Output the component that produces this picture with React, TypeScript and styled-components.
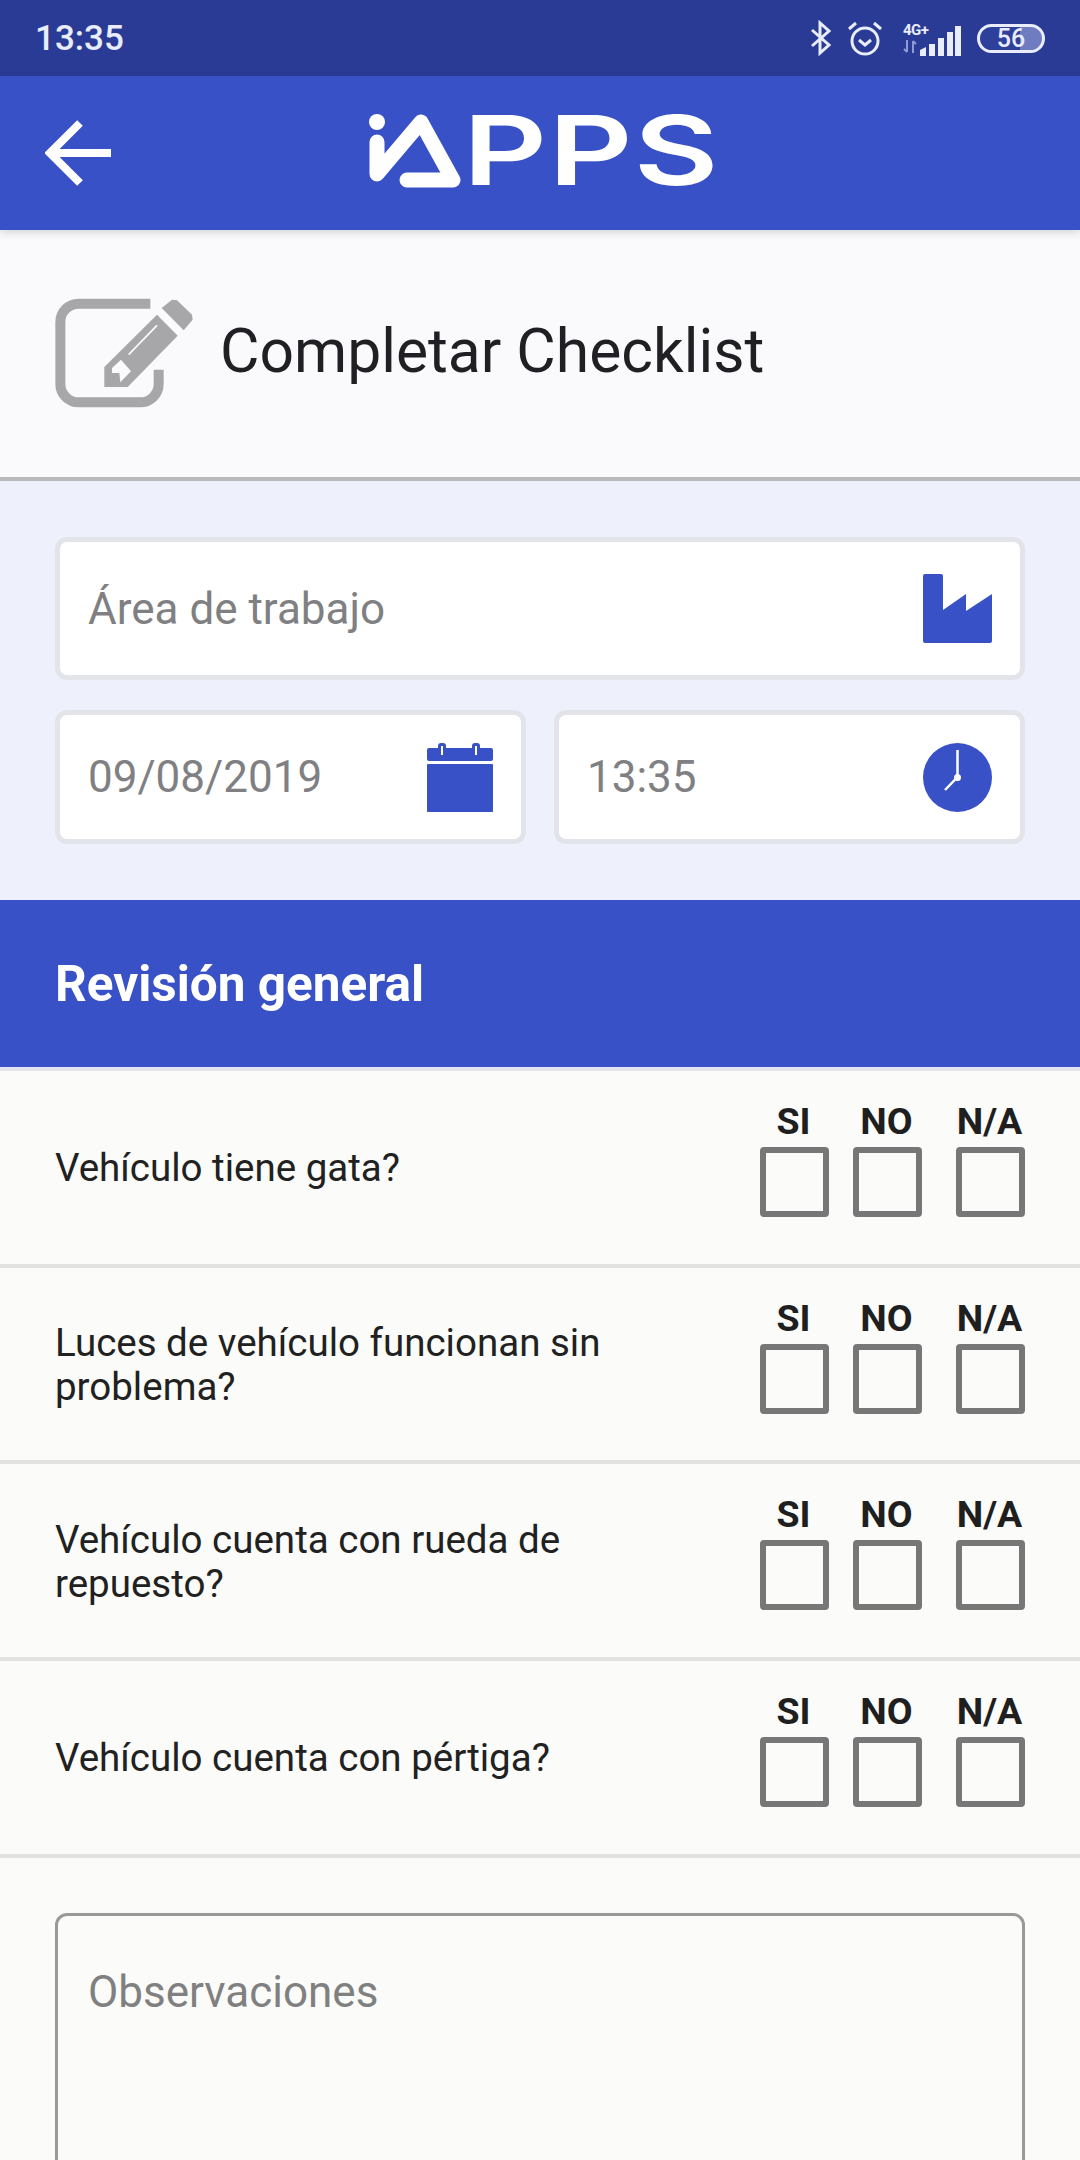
import styled, { createGlobalStyle } from "styled-components";

const GlobalStyle = createGlobalStyle`
  html, body {
    margin: 0;
    padding: 0;
    background: #fbfbf9;
    font-family: Roboto, "Noto Sans", sans-serif;
  }
  * {
    box-sizing: border-box;
  }
`;

const Page = styled.div`
  width: 1080px;
  height: 2160px;
  overflow: hidden;
  background: #fbfbf9;
`;

const StatusBar = styled.div`
  height: 76px;
  background: #2a3b96;
  display: flex;
  align-items: center;
  justify-content: space-between;
  padding: 0 35px;
  color: #e8ecfb;
`;

const Clock = styled.span`
  font-size: 35px;
  font-weight: 500;
`;

const StatusIcons = styled.div`
  display: flex;
  align-items: center;
`;

const Bluetooth = styled.svg`
  width: 22px;
  height: 36px;
  margin-right: 15px;
`;

const Alarm = styled.svg`
  width: 36px;
  height: 36px;
  margin-right: 20px;
`;

const Network = styled.div`
  width: 30px;
  display: flex;
  flex-direction: column;
  gap: 3px;
  margin-right: -13px;
  font-size: 15px;
  line-height: 14px;
  font-weight: 700;
  letter-spacing: -0.5px;
`;

const Arrows = styled.svg`
  width: 14px;
  height: 13px;
`;

const Signal = styled.svg`
  width: 41px;
  height: 30px;
  margin-right: 16px;
  align-self: flex-end;
`;

const Battery = styled.div`
  position: relative;
  width: 68px;
  height: 29px;
  border: 3.5px solid #e8ecfb;
  border-radius: 15px;
  overflow: hidden;
  display: flex;
  align-items: center;
  justify-content: center;
  font-size: 25px;
  font-weight: 500;
  background: linear-gradient(to right, #2f3f9c 64%, #6f7cc0 64%);
`;

const Header = styled.header`
  position: relative;
  height: 154px;
  background: #3951c6;
  display: flex;
  align-items: center;
  padding-left: 45px;
  box-shadow: 0 3px 8px rgba(0, 0, 0, 0.14);
`;

const BackArrow = styled.svg`
  width: 66px;
  height: 66px;
  flex: none;
`;

const Logo = styled.div`
  display: flex;
  align-items: center;
  margin-left: 254px;
  margin-top: -7px;
  color: #fff;
`;

const LogoMark = styled.svg`
  width: 96px;
  height: 76px;
  flex: none;
`;

const LogoText = styled.span`
  font-family: Inter, sans-serif;
  font-size: 96px;
  line-height: 76px;
  font-weight: 600;
  letter-spacing: 1px;
  margin-left: 2px;
  transform: scaleX(1.357);
  transform-origin: left center;
`;

const TitleBar = styled.section`
  height: 251px;
  background: #fafafd;
  border-bottom: 4px solid #b8b9bb;
  display: flex;
  align-items: center;
  gap: 26px;
  padding: 0 0 4px 55px;
`;

const TitleIcon = styled.svg`
  width: 139px;
  height: 110px;
  flex: none;
  margin-top: 3px;
`;

const Title = styled.h1`
  margin: 0;
  font-size: 60.6px;
  font-weight: 400;
  color: #1f1f24;
`;

const Form = styled.section`
  background: #eef1fc;
  padding: 56px 55px 56px;
  display: flex;
  flex-direction: column;
  gap: 30px;
`;

const FieldRow = styled.div`
  display: grid;
  grid-template-columns: 1fr 1fr;
  gap: 28px;
`;

const Field = styled.div<{ $height: number }>`
  height: ${(p) => p.$height}px;
  background: #fff;
  border: 5px solid #e2e4ea;
  border-radius: 12px;
  display: flex;
  align-items: center;
  justify-content: space-between;
  padding: 0 28px 0 28px;
  font-size: 44px;
  color: #808083;
`;

const FieldIcon = styled.svg`
  width: 69px;
  height: 69px;
  flex: none;
`;

const SectionHeader = styled.h2`
  margin: 0;
  height: 171px;
  background: #3951c6;
  border-bottom: 4px solid #e3e5ec;
  color: #fff;
  font-size: 49.5px;
  font-weight: 700;
  display: flex;
  align-items: center;
  padding-left: 55px;
`;

const QuestionRow = styled.div`
  height: 196.7px;
  border-bottom: 4px solid #e2e2e0;
  display: flex;
  justify-content: space-between;
  padding: 0 55px;
`;

const Question = styled.div`
  width: 600px;
  align-self: center;
  margin-top: 2px;
  font-size: 38.5px;
  line-height: 44px;
  color: #212121;
`;

const Options = styled.div`
  display: flex;
  gap: 24px;
  padding-top: 28px;
`;

const Option = styled.div`
  width: 69px;
  display: flex;
  flex-direction: column;
  align-items: center;
  gap: 4px;
  &:last-child {
    margin-left: 10px;
  }
`;

const OptionLabel = styled.span`
  height: 44px;
  margin-left: -2px;
  font-size: 37.5px;
  line-height: 44px;
  font-weight: 700;
  color: #1f1f1f;
  white-space: nowrap;
`;

const CheckBox = styled.div`
  width: 69px;
  height: 70px;
  border: 6px solid #777;
  border-radius: 4px;
`;

const NotesWrap = styled.div`
  padding: 55px 55px 0;
`;

const Notes = styled.div`
  height: 400px;
  border: 3px solid #999;
  border-radius: 12px;
  padding: 51px 30px;
  font-size: 44px;
  line-height: 50px;
  color: #808080;
`;

const questions = [
  "Vehículo tiene gata?",
  "Luces de vehículo funcionan sin problema?",
  "Vehículo cuenta con rueda de repuesto?",
  "Vehículo cuenta con pértiga?",
];

const answers = ["SI", "NO", "N/A"];

const blue = "#3951c6";

export default function App() {
  return (
    <Page>
      <GlobalStyle />
      <StatusBar>
        <Clock>13:35</Clock>
        <StatusIcons>
          <Bluetooth viewBox="0 0 22 36" fill="none" stroke="#e8ecfb" strokeWidth="3">
            <path d="M2 10 L19 25 L10 33 V3 L19 11 L2 26" />
          </Bluetooth>
          <Alarm viewBox="0 0 36 36" fill="none" stroke="#e8ecfb" strokeWidth="3">
            <circle cx="18" cy="21" r="13" />
            <path d="M12 20 L18 25 L24 20" />
            <path d="M2 9 L9 3 M34 9 L27 3" />
          </Alarm>
          <Network>
            <span>4G+</span>
            <Arrows viewBox="0 0 14 13" fill="none" stroke="#8f9bd6" strokeWidth="2">
              <path d="M4 0 V12 M1 9 L4 12 M10 13 V1 M10 1 L13 4" />
            </Arrows>
          </Network>
          <Signal viewBox="0 0 41 30" fill="#e8ecfb">
            <path d="M0 24 L6 21 V30 H0 Z" />
            <rect x="9" y="18" width="6" height="12" />
            <rect x="18" y="12" width="6" height="18" />
            <rect x="27" y="6" width="6" height="24" />
            <rect x="35" y="0" width="6" height="30" />
          </Signal>
          <Battery>56</Battery>
        </StatusIcons>
      </StatusBar>

      <Header>
        <BackArrow viewBox="0 0 66 66" fill="none" stroke="#fff" strokeWidth="8">
          <path d="M35 3 L5 33 L35 63" />
          <path d="M6 33 H66" />
        </BackArrow>
        <Logo>
          <LogoMark viewBox="0 0 96 76" fill="none" stroke="#fff" strokeWidth="15" strokeLinecap="round" strokeLinejoin="round">
            <circle cx="12" cy="10" r="8" fill="#fff" stroke="none" />
            <path d="M12 30 V62 L56 10 L88 68 H42" />
          </LogoMark>
          <LogoText>PPS</LogoText>
        </Logo>
      </Header>

      <TitleBar>
        <TitleIcon viewBox="165 115 415 330">
          <path
            d="M450 132 H235 a55 55 0 0 0 -55 55 V373 a55 55 0 0 0 55 55 H420 a55 55 0 0 0 55 -55 V330"
            fill="none"
            stroke="#a7a7a9"
            strokeWidth="30"
          />
          <path d="M484 145 L515 120 L530 122 L575 165 L577 180 L550 212 Z" fill="#a7a7a9" />
          <path d="M470 165 L532 228 L382 382 H312 V322 Z" fill="#a7a7a9" />
          <path d="M385 285 L470 197" stroke="#fafafd" strokeWidth="5" />
          <path d="M335 325 L362 300 L392 335 L360 368 L357 340 H335 Z" fill="#fafafd" />
        </TitleIcon>
        <Title>Completar Checklist</Title>
      </TitleBar>

      <Form>
        <Field $height={143}>
          Área de trabajo
          <FieldIcon viewBox="0 0 69 69" fill={blue}>
            <path d="M0 2 a2 2 0 0 1 2 -2 H18 a2 2 0 0 1 2 2 V36 L43 20 V37 L69 20 V67 a2 2 0 0 1 -2 2 H2 a2 2 0 0 1 -2 -2 Z" />
          </FieldIcon>
        </Field>
        <FieldRow>
          <Field $height={134}>
            09/08/2019
            <FieldIcon viewBox="0 0 69 69" fill={blue}>
              <rect x="3" y="5" width="66" height="13" rx="2" />
              <rect x="3" y="21" width="66" height="48" rx="1" />
              <rect x="14" y="0" width="8" height="13" rx="3" />
              <rect x="48" y="0" width="8" height="13" rx="3" />
              <path d="M18 3 V12 M52 3 V12" stroke="#fff" strokeWidth="2" />
            </FieldIcon>
          </Field>
          <Field $height={134}>
            13:35
            <FieldIcon viewBox="0 0 69 69">
              <circle cx="34.5" cy="34.5" r="34.5" fill={blue} />
              <path d="M34.5 7 V34 L22 47" fill="none" stroke="#fff" strokeWidth="2.5" />
              <circle cx="34.5" cy="34.5" r="3.5" fill="#fff" />
            </FieldIcon>
          </Field>
        </FieldRow>
      </Form>

      <SectionHeader>Revisión general</SectionHeader>

      {questions.map((q) => (
        <QuestionRow key={q}>
          <Question>{q}</Question>
          <Options>
            {answers.map((a) => (
              <Option key={a}>
                <OptionLabel>{a}</OptionLabel>
                <CheckBox />
              </Option>
            ))}
          </Options>
        </QuestionRow>
      ))}

      <NotesWrap>
        <Notes>Observaciones</Notes>
      </NotesWrap>
    </Page>
  );
}
